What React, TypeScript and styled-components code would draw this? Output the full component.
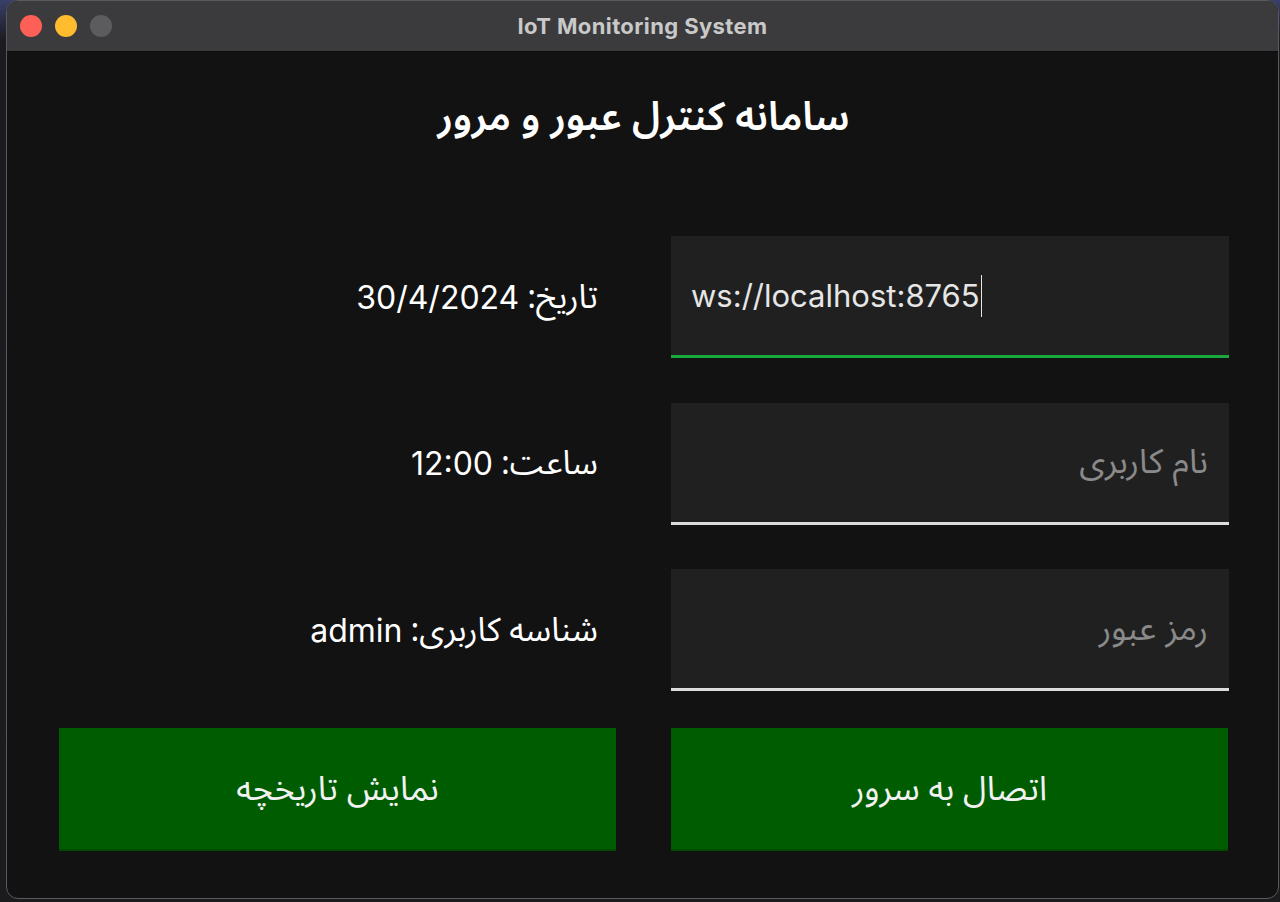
import React from "react";
import styled, { createGlobalStyle } from "styled-components";

const Global = createGlobalStyle`
  html, body { margin: 0; padding: 0; }
  body {
    width: 1280px;
    height: 902px;
    overflow: hidden;
    background: linear-gradient(180deg, #3a3f6a 0px, #1c1c20 40px, #1b1b1d 100%);
    font-family: "Inter", "Noto Sans Arabic", "DejaVu Sans", sans-serif;
  }
`;

const Desktop = styled.div`
  display: flex;
  padding-left: 6px;
  height: 902px;
  box-sizing: border-box;
`;

const Window = styled.div`
  width: 1273px;
  height: 899px;
  border-radius: 12px;
  border: 1px solid #5a5a5e;
  box-sizing: border-box;
  background: #121212;
  overflow: hidden;
  display: flex;
  flex-direction: column;
`;

const TitleBar = styled.div`
  height: 50px;
  flex: none;
  background: #3b3b3d;
  border-bottom: 1px solid #0c0c0c;
  display: flex;
  align-items: center;
  position: relative;
  padding-left: 13px;
  gap: 13px;
`;

const Light = styled.span<{ $c: string }>`
  width: 22px;
  height: 22px;
  border-radius: 50%;
  background: ${(p) => p.$c};
`;

const WinTitle = styled.div`
  position: absolute;
  left: 0;
  right: 0;
  top: 0;
  bottom: 0;
  display: flex;
  align-items: center;
  justify-content: center;
  font-family: "Inter", "Liberation Sans", sans-serif;
  font-weight: 700;
  font-size: 22px;
  letter-spacing: 0.4px;
  color: #c9c9c9;
  pointer-events: none;
`;

const Content = styled.div`
  flex: 1;
  display: flex;
  flex-direction: column;
  padding: 39px 50px 0 52px;
`;

const Heading = styled.h1`
  margin: 0;
  text-align: center;
  direction: rtl;
  font-family: "Noto Sans Arabic", "DejaVu Sans", sans-serif;
  font-weight: 600;
  font-size: 39.5px;
  line-height: 54px;
  color: #ffffff;
`;

const FormGrid = styled.div`
  margin-top: 91px;
  display: grid;
  grid-template-columns: 557px 558px;
  grid-auto-rows: 122px;
  column-gap: 55px;
  row-gap: 44.5px;
`;

const Label = styled.div`
  direction: rtl;
  display: flex;
  align-items: center;
  gap: 0.25em;
  padding-right: 18px;
  font-family: "Inter", "Noto Sans Arabic", "DejaVu Sans", sans-serif;
  font-size: 32px;
  color: #ffffff;
`;

const LabelName = styled.span`
  font-family: "Noto Sans Arabic", "DejaVu Sans", sans-serif;
  font-size: 33px;
`;

const LabelValue = styled.span`
  direction: ltr;
`;

const Field = styled.div<{ $line: string; $rtl?: boolean }>`
  background: #202020;
  border-bottom: 3px solid ${(p) => p.$line};
  box-sizing: border-box;
  display: flex;
  align-items: center;
  padding: 0 21px 0 20px;
  direction: ${(p) => (p.$rtl ? "rtl" : "ltr")};
  font-family: "Inter", "Noto Sans Arabic", "DejaVu Sans", sans-serif;
  font-size: ${(p) => (p.$rtl ? "34px" : "31px")};
`;

const Value = styled.span`
  color: #e6e6e6;
`;

const Caret = styled.span`
  display: inline-block;
  width: 1px;
  height: 42px;
  background: #e6e6e6;
  margin-left: 1px;
`;

const Placeholder = styled.span`
  color: #8a8a8a;
`;

const ButtonRow = styled.div`
  margin-top: 37px;
  display: grid;
  grid-template-columns: 557px 557px;
  column-gap: 55px;
`;

const Button = styled.button`
  height: 123px;
  border: none;
  border-bottom: 2px solid #004a00;
  background: #005c00;
  color: #f2f2f2;
  direction: rtl;
  font-family: "Noto Sans Arabic", "DejaVu Sans", sans-serif;
  font-size: 34px;
  cursor: pointer;
`;

const rows = [
  { name: "تاریخ:", value: "30/4/2024" },
  { name: "ساعت:", value: "12:00" },
  { name: "شناسه کاربری:", value: "admin" },
];

export default function App() {
  return (
    <>
      <Global />
      <Desktop>
        <Window>
          <TitleBar>
            <Light $c="#fe5f57" />
            <Light $c="#febc2e" />
            <Light $c="#5c5c5e" />
            <WinTitle>IoT Monitoring System</WinTitle>
          </TitleBar>
          <Content>
            <Heading>سامانه کنترل عبور و مرور</Heading>
            <FormGrid>
              <Label>
                <LabelName>{rows[0].name}</LabelName>
                <LabelValue>{rows[0].value}</LabelValue>
              </Label>
              <Field $line="#19a83c">
                <Value>ws://localhost:8765</Value>
                <Caret />
              </Field>
              <Label>
                <LabelName>{rows[1].name}</LabelName>
                <LabelValue>{rows[1].value}</LabelValue>
              </Label>
              <Field $line="#dcdcdc" $rtl>
                <Placeholder>نام کاربری</Placeholder>
              </Field>
              <Label>
                <LabelName>{rows[2].name}</LabelName>
                <LabelValue>{rows[2].value}</LabelValue>
              </Label>
              <Field $line="#dcdcdc" $rtl>
                <Placeholder>رمز عبور</Placeholder>
              </Field>
            </FormGrid>
            <ButtonRow>
              <Button>نمایش تاریخچه</Button>
              <Button>اتصال به سرور</Button>
            </ButtonRow>
          </Content>
        </Window>
      </Desktop>
    </>
  );
}
